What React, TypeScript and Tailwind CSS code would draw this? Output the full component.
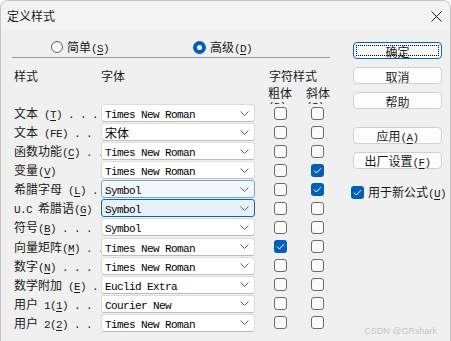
import React from "react";

function Txt({ s }: { s: string }) {
  const parts: React.ReactNode[] = [];
  let i = 0;
  let key = 0;
  while (i < s.length) {
    let under = false;
    if (s[i] === "&" && i + 1 < s.length) {
      under = true;
      i++;
    }
    const ch = s[i];
    const ascii = ch.charCodeAt(0) < 128;
    if (under) {
      parts.push(
        <span
          key={key++}
          className={
            ascii
              ? "underline underline-offset-[2px] font-['Liberation_Mono',monospace] text-[11px] tracking-[-0.6px]"
              : "underline underline-offset-[2px] font-['Noto_Sans_CJK_SC',sans-serif] text-[12px]"
          }
        >
          {ch}
        </span>
      );
      i++;
      continue;
    }
    let j = i;
    while (
      j < s.length &&
      s[j] !== "&" &&
      (s[j].charCodeAt(0) < 128) === ascii
    )
      j++;
    const run = s.slice(i, j);
    parts.push(
      <span
        key={key++}
        className={
          ascii
            ? "font-['Liberation_Mono',monospace] text-[11px] tracking-[-0.6px]"
            : "font-['Noto_Sans_CJK_SC',sans-serif] text-[12px]"
        }
      >
        {run}
      </span>
    );
    i = j;
  }
  return <span className="whitespace-pre">{parts}</span>;
}

type Row = {
  label: string;
  font: string;
  b?: boolean;
  i?: boolean;
  hl?: number;
};

const rows: Row[] = [
  { label: "文本 (&T) . . .", font: "Times New Roman" },
  { label: "文本 (FE) . .", font: "宋体" },
  { label: "函数功能(&C) . . .", font: "Times New Roman" },
  { label: "变量(&V)", font: "Times New Roman", i: true },
  { label: "希腊字母 (&L) .", font: "Symbol", i: true, hl: 1 },
  { label: "U.C 希腊语(&G)", font: "Symbol", hl: 2 },
  { label: "符号(&B) . . .", font: "Symbol" },
  { label: "向量矩阵(&M) . .", font: "Times New Roman", b: true },
  { label: "数字(&N) . . .", font: "Times New Roman" },
  { label: "数学附加 (&E) .", font: "Euclid Extra" },
  { label: "用户 1(&1) . .", font: "Courier New" },
  { label: "用户 2(&2) . .", font: "Times New Roman" },
];

function Check({ on }: { on?: boolean }) {
  if (on)
    return (
      <div className="w-[13px] h-[13px] rounded-[3px] bg-[#005fb8] flex items-center justify-center">
        <svg width="9" height="7" viewBox="0 0 9 7">
          <path d="M1 3.6 L3.4 6 L8 1.2" fill="none" stroke="#ffffff" strokeWidth="1" />
        </svg>
      </div>
    );
  return <div className="w-[13px] h-[13px] rounded-[3px] border border-[#6a6a6a] bg-[#fbfbfb]" />;
}

function Chevron() {
  return (
    <svg width="9" height="5" viewBox="0 0 9 5" className="shrink-0">
      <path d="M0.5 0.5 L4.5 4.5 L8.5 0.5" fill="none" stroke="#5f5f5f" strokeWidth="1" />
    </svg>
  );
}

function Btn({ label, def }: { label: string; def?: boolean }) {
  return (
    <div
      className={
        "h-[17px] w-[89px] rounded-[4px] border flex items-center justify-center relative text-[#1a1a1a] " +
        (def ? "border-[#0067c0] bg-[#fdfdfd]" : "border-[#d0d0d0] bg-[#fdfdfd]")
      }
    >
      {def && (
        <div className="absolute inset-[2px] border border-dotted border-[#000000]" />
      )}
      <span className="leading-[14px]">
        <Txt s={label} />
      </span>
    </div>
  );
}

export default function App() {
  return (
    <div className="w-[451px] h-[341px] bg-[#f0f0f0] rounded-t-[8px] border-x border-t border-[#c4c4c4] overflow-hidden relative text-[#1a1a1a] font-['Noto_Sans_CJK_SC',sans-serif]">
      <div className="h-[29px] bg-[#f3f3f3] flex items-center justify-between pl-[6px] pr-[8px]">
        <span className="text-[12px] leading-[14px] mt-[1px]">定义样式</span>
        <svg width="11" height="11" viewBox="0 0 11 11" className="mt-[1px]">
          <path d="M0.5 0.5 L10.5 10.5 M10.5 0.5 L0.5 10.5" stroke="#1a1a1a" strokeWidth="1" />
        </svg>
      </div>
      <div className="flex">
        <div className="w-[340px] pl-[11px]">
          <div className="h-[16px] mt-[9px] flex items-center">
            <div className="ml-[39px] w-[142px] flex items-center gap-[4px]">
              <div className="w-[12px] h-[12px] rounded-full border border-[#5c5c5c] bg-[#f9f9f9]" />
              <span className="leading-[14px]">
                <Txt s="简单(&S)" />
              </span>
            </div>
            <div className="flex items-center gap-[4px]">
              <div className="w-[13px] h-[13px] rounded-full bg-[#005fb8] flex items-center justify-center">
                <div className="w-[5px] h-[5px] rounded-full bg-white" />
              </div>
              <span className="leading-[14px]">
                <Txt s="高级(&D)" />
              </span>
            </div>
          </div>
          <div className="mt-[2px] h-px w-[318px] bg-[#9c9c9c]" />
          <div className="mt-[10px] flex h-[16px] items-center text-[12px]">
            <span className="ml-[2px] w-[87px]">样式</span>
            <span className="w-[168px]">字体</span>
            <span>字符样式</span>
          </div>
          <div className="h-[20px] flex overflow-hidden text-[12px] leading-[12px]">
            <div className="ml-[256px] w-[38px] pt-[3px]">
              <div>粗体</div>
              <div>
                <Txt s="(&B)" />
              </div>
            </div>
            <div className="w-[30px] pt-[3px]">
              <div>斜体</div>
              <div>
                <Txt s="(&I)" />
              </div>
            </div>
          </div>
          <div className="flex flex-col gap-[1.08px]">
            {rows.map((r, idx) => (
              <div key={idx} className="h-[18px] flex items-center">
                <div className="ml-[2px] w-[87px] overflow-hidden leading-[14px]">
                  <Txt s={r.label} />
                </div>
                <div
                  className={
                    "w-[154px] h-[18px] rounded-[3px] flex items-center justify-between pl-[3px] pr-[5px] " +
                    (r.hl === 1
                      ? "border border-[#6fa3d9] bg-[#f4f8fd]"
                      : r.hl === 2
                      ? "border border-[#0067c0] bg-[#e6f1fb]"
                      : "border border-[#dcdcdc] border-b-[#bdbdbd] bg-white")
                  }
                >
                  <span className="leading-[14px] text-black">
                    <Txt s={r.font} />
                  </span>
                  <Chevron />
                </div>
                <div className="ml-[19px]">
                  <Check on={r.b} />
                </div>
                <div className="ml-[24px]">
                  <Check on={r.i} />
                </div>
              </div>
            ))}
          </div>
        </div>
        <div className="ml-[12px] pt-[12px] flex flex-col">
          <Btn label="确定" def />
          <div className="mt-[8px]">
            <Btn label="取消" />
          </div>
          <div className="mt-[8px]">
            <Btn label="帮助" />
          </div>
          <div className="mt-[18px]">
            <Btn label="应用(&A)" />
          </div>
          <div className="mt-[8px]">
            <Btn label="出厂设置(&F)" />
          </div>
          <div className="mt-[14px] flex items-center gap-[4px] -ml-[2px]">
            <Check on />
            <span className="leading-[14px]">
              <Txt s="用于新公式(&U)" />
            </span>
          </div>
        </div>
      </div>
      <div className="absolute right-[13px] bottom-[5px] text-[9px] leading-[10px] text-[#c4c4c4] font-['Liberation_Sans',sans-serif]">
        CSDN @GRshark
      </div>
    </div>
  );
}
